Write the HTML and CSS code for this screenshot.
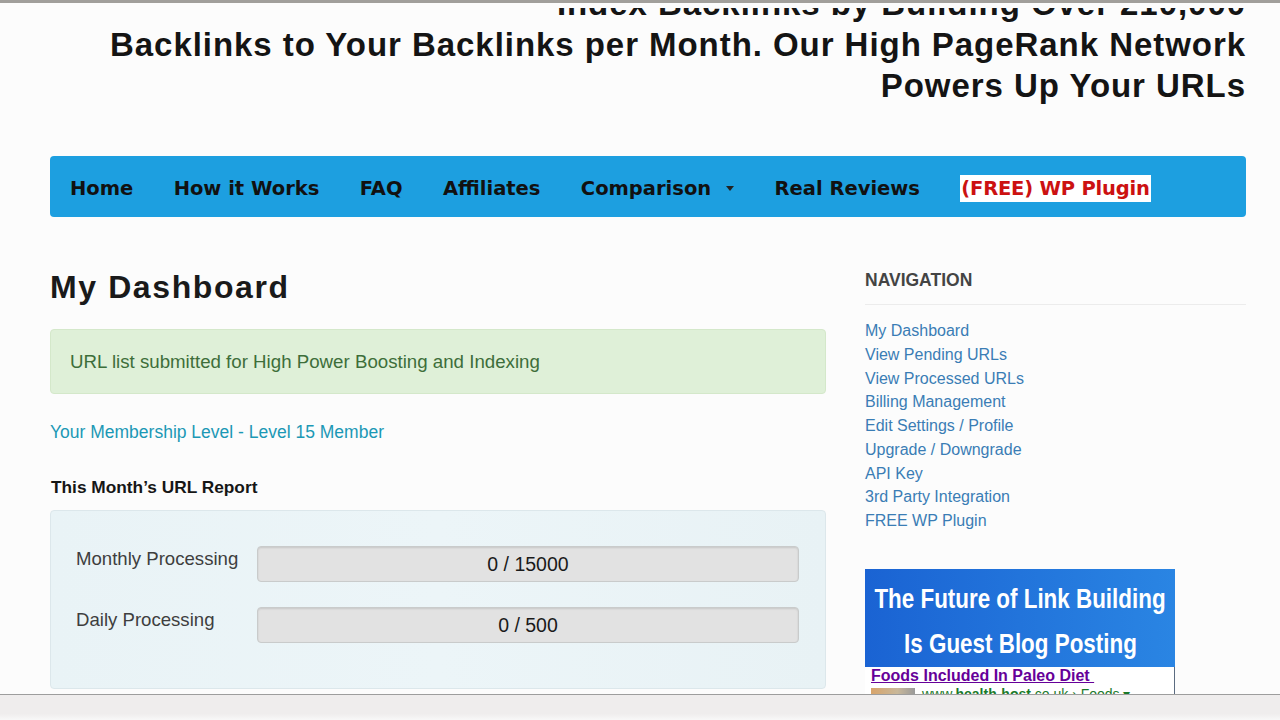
FILE: index.html
```html
<!DOCTYPE html>
<html lang="en">
<head>
<meta charset="utf-8">
<title>My Dashboard</title>
<link rel="stylesheet" href="styles.css">
</head>
<body>
<div class="page">
  <header class="masthead">
    <h2 class="tagline">Index Backlinks by Building Over 210,000<br>Backlinks to Your Backlinks per Month. Our High PageRank Network<br>Powers Up Your URLs</h2>
  </header>

  <nav class="mainnav">
    <a href="#">Home</a>
    <a href="#">How it Works</a>
    <a href="#">FAQ</a>
    <a href="#">Affiliates</a>
    <a href="#" class="dropdown">Comparison<span class="caret"></span></a>
    <a href="#">Real Reviews</a>
    <a href="#" class="promo">(FREE) WP Plugin</a>
  </nav>

  <div class="layout">
    <main class="content">
      <h1 class="page-title">My Dashboard</h1>
      <div class="alert">URL list submitted for High Power Boosting and Indexing</div>
      <p class="level">Your Membership Level - Level 15 Member</p>
      <h3 class="report-title">This Month’s URL Report</h3>
      <div class="report">
        <div class="row">
          <span class="row-label">Monthly Processing</span>
          <div class="meter">0 / 15000</div>
        </div>
        <div class="row">
          <span class="row-label">Daily Processing</span>
          <div class="meter">0 / 500</div>
        </div>
      </div>
    </main>

    <aside class="sidebar">
      <h4 class="side-title">NAVIGATION</h4>
      <hr class="side-rule">
      <ul class="side-links">
        <li><a href="#">My Dashboard</a></li>
        <li><a href="#">View Pending URLs</a></li>
        <li><a href="#">View Processed URLs</a></li>
        <li><a href="#">Billing Management</a></li>
        <li><a href="#">Edit Settings / Profile</a></li>
        <li><a href="#">Upgrade / Downgrade</a></li>
        <li><a href="#">API Key</a></li>
        <li><a href="#">3rd Party Integration</a></li>
        <li><a href="#">FREE WP Plugin</a></li>
      </ul>

      <div class="promo-banner">
        <div class="banner-head">
          <span class="banner-line">The Future of Link Building</span>
          <span class="banner-line">Is Guest Blog Posting</span>
        </div>
        <div class="banner-body">
          <span class="serp-title">Foods Included In Paleo Diet&nbsp;</span>
          <div class="serp-row">
            <span class="serp-thumb"></span>
            <span class="serp-url">www.<b>health-host</b>.co.uk › Foods ▾</span>
          </div>
        </div>
      </div>
    </aside>
  </div>
</div>
<div class="topbar"></div>
<div class="statusbar"></div>
</body>
</html>
```

FILE: styles.css
```css
html, body {
  margin: 0;
  height: 100%;
  overflow: hidden;
  background: #fcfcfc;
  font-family: "Liberation Sans", Arial, sans-serif;
}

/* Window chrome: thin grey edge with the page clipped just below it */
.topbar {
  position: fixed;
  top: 0;
  left: 0;
  right: 0;
  height: 5px;
  border-top: 3px solid #a19f9b;
  background: #fcfcfc;
}

.page {
  width: 1196px;
  margin-left: 50px;
}

/* Header tagline, scrolled partly out of view */
.tagline {
  margin: -17px 0 0;
  text-align: right;
  font-size: 33px;
  line-height: 41px;
  letter-spacing: 0.95px;
  font-weight: 700;
  color: #141414;
}

/* Main navigation bar */
.mainnav {
  margin-top: 50px;
  height: 61px;
  box-sizing: border-box;
  background: #1d9fe0;
  border-radius: 4px;
  display: flex;
  align-items: center;
  gap: 40.4px;
  padding: 3px 0 0 20px;
  font-family: "DejaVu Sans", "Liberation Sans", sans-serif;
  font-weight: 700;
  font-size: 19.5px;
}

.mainnav a {
  color: #111;
  text-decoration: none;
}

.dropdown {
  display: inline-flex;
  align-items: center;
}

.caret {
  display: inline-block;
  margin-left: 15px;
  border-left: 4.5px solid transparent;
  border-right: 4.5px solid transparent;
  border-top: 5px solid #222;
}

.mainnav .promo {
  background: #fff;
  color: #cc1111;
  line-height: 27px;
  letter-spacing: -0.2px;
  padding: 0 1px 0 1px;
}

/* Two-column body */
.layout {
  display: grid;
  grid-template-columns: 776px 381px;
  column-gap: 39px;
}

.page-title {
  margin: 50px 0 0;
  font-size: 32px;
  line-height: 40px;
  letter-spacing: 1.6px;
  color: #1a1a1a;
}

.alert {
  margin-top: 22px;
  height: 65px;
  box-sizing: border-box;
  border: 1px solid #d4e8ca;
  background: #dff0d8;
  border-radius: 4px;
  padding: 1px 19px 0;
  display: flex;
  align-items: center;
  color: #3d6e3a;
  font-size: 18.7px;
}

.level {
  margin: 26px 0 0;
  line-height: 24px;
  font-size: 17.5px;
  color: #1b98b5;
}

.report-title {
  margin: 31px 0 0 1px;
  font-size: 17.3px;
  line-height: 24px;
  font-weight: 700;
  color: #161616;
}

.report {
  margin-top: 11px;
  background: linear-gradient(90deg, #e9f3f6, #ecf5f8 50%, #e8f2f5);
  border: 1px solid #dce7eb;
  border-radius: 4px;
  padding: 35px 26px 45px 25px;
  display: flex;
  flex-direction: column;
  gap: 25px;
}

.row {
  display: flex;
  align-items: flex-start;
}

.row-label {
  width: 181px;
  flex: none;
  line-height: 26px;
  font-size: 18.6px;
  color: #3e3e3e;
}

.meter {
  flex: 1;
  height: 36px;
  box-sizing: border-box;
  border: 1px solid #c9cbcb;
  border-radius: 4px;
  background: #e2e2e2;
  box-shadow: inset 0 1px 2px rgba(0, 0, 0, 0.12);
  display: flex;
  align-items: center;
  justify-content: center;
  font-size: 19.5px;
  color: #1a1a1a;
}

/* Sidebar */
.side-title {
  margin: 53px 0 0;
  font-size: 17.5px;
  line-height: 20px;
  font-weight: 700;
  color: #444;
}

.side-rule {
  margin: 14px 0 0;
  border: 0;
  border-top: 1px solid #ececec;
  height: 0;
}

.side-links {
  list-style: none;
  margin: 14px 0 0;
  padding: 0;
  font-size: 16px;
  line-height: 23.75px;
}

.side-links a {
  color: #3a7db5;
  text-decoration: none;
}

.promo-banner {
  margin-top: 36px;
  width: 310px;
}

.banner-head {
  height: 98px;
  box-sizing: border-box;
  padding: 7px 0 1px;
  background: linear-gradient(90deg, #1a63d3, #2a85e3);
  display: flex;
  flex-direction: column;
  align-items: center;
}

.banner-line {
  white-space: nowrap;
  color: #fff;
  font-weight: 700;
  font-size: 28px;
  line-height: 45px;
  transform: scaleX(0.8);
}

.banner-body {
  background: #fff;
  border-right: 1px solid #5b6b80;
  padding: 0 0 10px 6px;
}

.serp-title {
  display: inline-block;
  color: #660099;
  font-weight: 700;
  font-size: 16px;
  line-height: 18px;
  text-decoration: underline;
}

.serp-row {
  display: flex;
  align-items: center;
  gap: 7px;
}

.serp-thumb {
  width: 44px;
  height: 12px;
  background: linear-gradient(90deg, #d8a46a, #c9b89a 60%, #9a9a9a);
}

.serp-url {
  color: #1a7a2a;
  font-size: 14px;
  line-height: 18px;
}

.serp-url b {
  font-weight: 700;
}

/* Browser status strip along the bottom edge */
.statusbar {
  position: fixed;
  left: 0;
  right: 0;
  bottom: 0;
  height: 25px;
  border-top: 1px solid #9d9d9d;
  background: linear-gradient(#efeded, #efeded 75%, #f8f8f8);
}
```
